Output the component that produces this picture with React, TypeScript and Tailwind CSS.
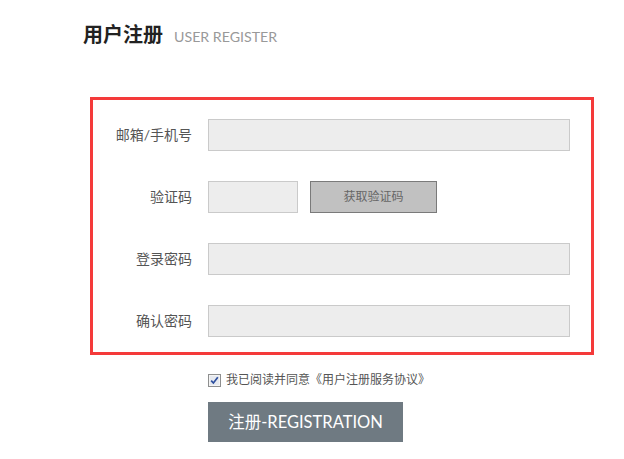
import React from "react";

const font = { fontFamily: 'Lato, "Noto Sans CJK SC", sans-serif' };

function Row({ label, children }: { label: string; children: React.ReactNode }) {
  return (
    <div className="flex h-[32px] items-center">
      <div className="w-[115px] pr-[16px] text-right text-[14px] leading-[20px] text-[#555555]">{label}</div>
      {children}
    </div>
  );
}

function Field({ w }: { w: string }) {
  return <div className={`${w} h-[32px] border border-[#cacaca] bg-[#ededed]`} />;
}

export default function App() {
  return (
    <div className="w-[624px] h-[459px] bg-white overflow-hidden" style={font}>
      <div className="h-[97px] pl-[83px] pt-[20px]">
        <div className="flex items-baseline gap-[11px]">
          <span className="text-[20px] font-bold leading-[28px] text-[#222222]">用户注册</span>
          <span className="text-[14.2px] leading-[28px] text-[#999999]">USER REGISTER</span>
        </div>
      </div>
      <div className="ml-[90px] flex h-[258px] w-[504px] flex-col gap-[30px] border-[3px] border-[#f43a3a] pt-[19px]">
        <Row label="邮箱/手机号">
          <Field w="w-[362px]" />
        </Row>
        <Row label="验证码">
          <Field w="w-[90px]" />
          <div className="ml-[12px] flex h-[32px] w-[127px] items-center justify-center border border-[#7a7a7a] bg-[#c1c1c1] text-[12px] text-[#666666]">
            获取验证码
          </div>
        </Row>
        <Row label="登录密码">
          <Field w="w-[362px]" />
        </Row>
        <Row label="确认密码">
          <Field w="w-[362px]" />
        </Row>
      </div>
      <div className="ml-[208px] mt-[17px] flex h-[16px] items-center gap-[5px]">
        <svg width="13" height="13" viewBox="0 0 13 13">
          <rect x="0.5" y="0.5" width="12" height="12" fill="#f4f4f4" stroke="#8e8f8f" />
          <rect x="2" y="2" width="9" height="9" fill="#e6e9ef" />
          <path d="M3.2 6.6 L5.4 9 L9.8 3.3" fill="none" stroke="#2d4f9e" strokeWidth="1.7" />
        </svg>
        <span className="text-[12px] leading-[16px] text-[#555555]">我已阅读并同意《用户注册服务协议》</span>
      </div>
      <div className="ml-[208px] mt-[14px] flex h-[40px] w-[195px] items-center justify-center bg-[#6f7a82] text-[16.5px] text-white">
        注册-REGISTRATION
      </div>
    </div>
  );
}
